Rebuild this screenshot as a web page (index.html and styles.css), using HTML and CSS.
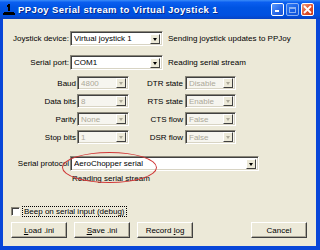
FILE: index.html
```html
<!DOCTYPE html>
<html lang="en">
<head>
<meta charset="UTF-8">
<meta name="viewport" content="width=device-width, initial-scale=1.0">
<title>PPJoy Serial stream to Virtual Joystick 1</title>
<link rel="stylesheet" href="styles.css">
</head>
<body>

<div class="window">
  <div class="titlebar">
    <svg class="app-icon" width="12" height="12" viewBox="0 0 12 12">
      <rect x="5" y="0" width="2" height="7" fill="#000"/>
      <rect x="4" y="1" width="1" height="2" fill="#000"/>
      <path d="M1 8 L11 8 L11 11 L1 11 Z" fill="#000"/>
      <rect x="0" y="9" width="12" height="2" fill="#000"/>
    </svg>
    <span class="title">PPJoy Serial stream to Virtual Joystick 1</span>
    <div class="caption-buttons">
      <div class="cap-btn"><span class="min-glyph"></span></div>
      <div class="cap-btn disabled"><span class="max-glyph"></span></div>
      <div class="cap-btn close">
        <svg width="9" height="9" viewBox="0 0 9 9"><path d="M1 1 L8 8 M8 1 L1 8" stroke="#fff" stroke-width="1.8"/></svg>
      </div>
    </div>
  </div>

  <div class="client">
    <!-- joystick + port -->
    <div class="field-row">
      <label class="lbl">Joystick device:</label>
      <div class="combo combo-wide"><span class="combo-text">Virtual joystick 1</span><span class="drop"></span></div>
      <span class="status">Sending joystick updates to PPJoy</span>
    </div>
    <div class="field-row row-port">
      <label class="lbl">Serial port:</label>
      <div class="combo combo-wide"><span class="combo-text">COM1</span><span class="drop"></span></div>
      <span class="status">Reading serial stream</span>
    </div>

    <!-- line settings, all greyed out -->
    <div class="settings">
      <label class="lbl">Baud</label>
      <div class="combo off"><span class="combo-text">4800</span><span class="drop"></span></div>
      <label class="lbl">DTR state</label>
      <div class="combo off"><span class="combo-text">Disable</span><span class="drop"></span></div>

      <label class="lbl">Data bits</label>
      <div class="combo off"><span class="combo-text">8</span><span class="drop"></span></div>
      <label class="lbl">RTS state</label>
      <div class="combo off"><span class="combo-text">Enable</span><span class="drop"></span></div>

      <label class="lbl">Parity</label>
      <div class="combo off"><span class="combo-text">None</span><span class="drop"></span></div>
      <label class="lbl">CTS flow</label>
      <div class="combo off"><span class="combo-text">False</span><span class="drop"></span></div>

      <label class="lbl">Stop bits</label>
      <div class="combo off"><span class="combo-text">1</span><span class="drop"></span></div>
      <label class="lbl">DSR flow</label>
      <div class="combo off"><span class="combo-text">False</span><span class="drop"></span></div>
    </div>

    <div class="protocol">
      <div class="field-row">
        <label class="lbl">Serial protocol</label>
        <div class="combo combo-long"><span class="combo-text">AeroChopper serial</span><span class="drop"></span></div>
      </div>
      <div class="proto-status">Reading serial stream</div>
      <div class="marker"></div>
    </div>

    <div class="check-row">
      <span class="checkbox"></span>
      <span class="check-label">Beep on serial input (debug)</span>
    </div>

    <div class="button-row">
      <button class="btn"><u>L</u>oad .ini</button>
      <button class="btn"><u>S</u>ave .ini</button>
      <button class="btn">Record <u>l</u>og</button>
      <button class="btn btn-cancel">Cancel</button>
    </div>
  </div>
</div>

</body>
</html>
```

FILE: styles.css
```css
body {
  margin: 0;
  padding: 0;
  font-family: "Liberation Sans", Arial, sans-serif;
  font-size: 8px;
  color: #000;
  overflow: hidden;
}

.window {
  width: 320px;
  height: 250px;
  display: flex;
  flex-direction: column;
  background-color: #0846d8;
}

/* title bar */
.titlebar {
  height: 19px;
  display: flex;
  align-items: center;
  padding: 0 2px 0 3px;
  background: linear-gradient(to bottom, #3a8cf8 0%, #0a5ef0 12%, #0054e3 40%, #0050e0 80%, #0843c4 100%);
}

.app-icon {
  flex: none;
}

.title {
  margin-left: 3px;
  color: #fff;
  font-weight: bold;
  font-size: 9.5px;
  letter-spacing: 0.4px;
  text-shadow: 1px 1px 0 #0a2a8a;
  white-space: nowrap;
}

.caption-buttons {
  margin-left: auto;
  display: flex;
  gap: 2px;
  margin-right: 4px;
}

.cap-btn {
  width: 13px;
  height: 13px;
  border: 1px solid #fff;
  border-radius: 2px;
  box-sizing: border-box;
  background: linear-gradient(135deg, #5c9cff 0%, #2767e8 60%, #1c54d0 100%);
  display: flex;
  align-items: center;
  justify-content: center;
  position: relative;
}

.cap-btn.disabled {
  opacity: 0.55;
}

.cap-btn.close {
  background: linear-gradient(135deg, #f0a080 0%, #e0502c 55%, #c83a18 100%);
}

.min-glyph {
  position: absolute;
  left: 3px;
  bottom: 3px;
  width: 4px;
  height: 2px;
  background-color: #fff;
}

.max-glyph {
  width: 7px;
  height: 6px;
  border: 1px solid #fff;
  border-top-width: 2px;
  box-sizing: border-box;
}

/* dialog body */
.client {
  flex: 1;
  margin: 0 4px 4px 3px;
  background-color: #ece9d8;
  padding-top: 12px;
  position: relative;
}

.field-row {
  display: flex;
  align-items: center;
}

.row-port {
  margin-top: 9px;
}

.lbl {
  width: 66px;
  text-align: right;
  flex: none;
  white-space: nowrap;
}

.status {
  margin-left: 5px;
  white-space: nowrap;
}

/* classic sunken combo box */
.combo {
  height: 15px;
  box-sizing: border-box;
  border-top: 1px solid #8a877a;
  border-left: 1px solid #8a877a;
  border-bottom: 1px solid #fff;
  border-right: 1px solid #fff;
  box-shadow: inset 1px 1px 0 #404040, inset -1px -1px 0 #d8d4c4;
  background-color: #fff;
  display: flex;
  align-items: center;
  padding: 2px 2px 2px 3px;
  margin-left: 1px;
}

.combo-text {
  flex: 1;
  white-space: nowrap;
  overflow: hidden;
}

.drop {
  width: 10px;
  height: 10px;
  flex: none;
  box-sizing: border-box;
  background-color: #ece9d8;
  border-top: 1px solid #fff;
  border-left: 1px solid #fff;
  border-right: 1px solid #404040;
  border-bottom: 1px solid #404040;
  position: relative;
}

.drop::after {
  content: "";
  position: absolute;
  left: 2px;
  top: 3px;
  border-left: 2.5px solid transparent;
  border-right: 2.5px solid transparent;
  border-top: 3px solid #000;
}

.combo-wide {
  width: 93px;
}

.combo-long {
  width: 189px;
}

.combo.off {
  height: 14px;
  background-color: #f6f5ef;
  color: #aca899;
}

.combo.off .drop::after {
  border-top-color: #aca899;
}

.settings {
  margin-top: 6px;
  display: grid;
  grid-template-columns: 73px 53px 54px 53px;
  grid-auto-rows: 14px;
  row-gap: 4px;
  align-items: center;
}

.settings .lbl {
  width: auto;
}

.settings .combo {
  margin-left: 1px;
}

.settings .combo:nth-child(4n) {
  margin-left: 2px;
}

.protocol {
  margin-top: 12px;
  position: relative;
}

.proto-status {
  padding-left: 69px;
  margin-top: 3px;
}

.marker {
  position: absolute;
  left: 59px;
  top: -4px;
  width: 93px;
  height: 29px;
  border: 1px solid #d03838;
  border-radius: 50%;
}

.check-row {
  margin-top: 24px;
  display: flex;
  align-items: center;
  padding-left: 8px;
}

.checkbox {
  width: 9px;
  height: 9px;
  box-sizing: border-box;
  background-color: #fff;
  border-top: 1px solid #8a877a;
  border-left: 1px solid #8a877a;
  border-bottom: 1px solid #fff;
  border-right: 1px solid #fff;
  box-shadow: inset 1px 1px 0 #404040;
}

.check-label {
  margin-left: 3px;
  padding: 0 1px;
  outline: 1px dotted #000;
}

.button-row {
  margin-top: 6px;
  display: flex;
  gap: 7px;
  padding-left: 8px;
  padding-right: 9px;
}

.btn {
  width: 56px;
  height: 16px;
  padding: 0;
  font-family: "Liberation Sans", Arial, sans-serif;
  font-size: 8px;
  color: #000;
  background-color: #ece9d8;
  border-top: 1px solid #fff;
  border-left: 1px solid #fff;
  border-right: 1px solid #404040;
  border-bottom: 1px solid #404040;
  box-shadow: inset -1px -1px 0 #aca899;
}

.btn-cancel {
  margin-left: auto;
}
```
